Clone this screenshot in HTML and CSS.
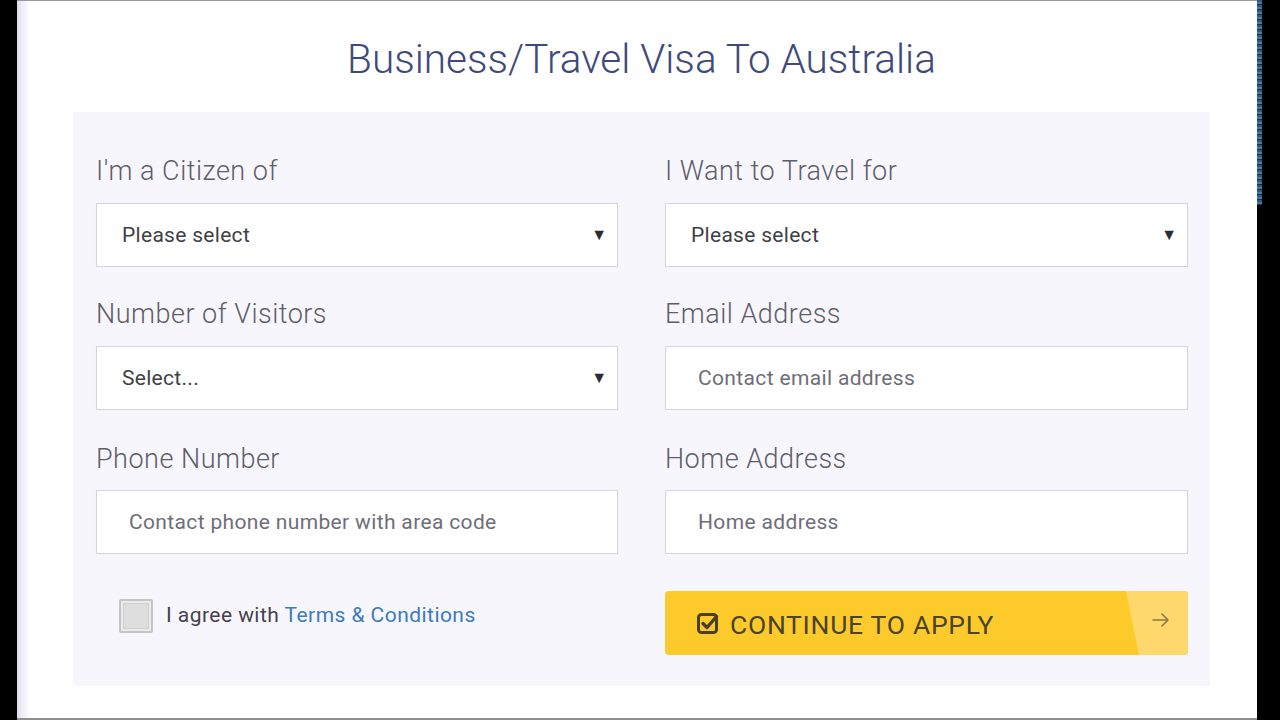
FILE: index.html
```html
<!DOCTYPE html>
<html lang="en">
<head>
<meta charset="utf-8">
<title>Business/Travel Visa To Australia</title>
<link rel="stylesheet" href="styles.css">
</head>
<body>
<div class="frame">
  <div class="edge-left"></div>
  <main class="page">
    <h1 class="title">Business/Travel Visa To Australia</h1>
    <form class="panel">
      <div class="grid">
        <div class="field">
          <label class="label">I'm a Citizen of</label>
          <div class="box select"><span class="value">Please select</span><span class="caret">&#9660;</span></div>
        </div>
        <div class="field">
          <label class="label">I Want to Travel for</label>
          <div class="box select"><span class="value">Please select</span><span class="caret">&#9660;</span></div>
        </div>
        <div class="field">
          <label class="label">Number of Visitors</label>
          <div class="box select"><span class="value">Select...</span><span class="caret">&#9660;</span></div>
        </div>
        <div class="field">
          <label class="label">Email Address</label>
          <div class="box input"><span class="placeholder">Contact email address</span></div>
        </div>
        <div class="field field-low">
          <label class="label">Phone Number</label>
          <div class="box input"><span class="placeholder">Contact phone number with area code</span></div>
        </div>
        <div class="field field-low">
          <label class="label">Home Address</label>
          <div class="box input"><span class="placeholder">Home address</span></div>
        </div>
        <div class="agree">
          <span class="check"></span>
          <span class="agree-text">I agree with <a class="link" href="#">Terms &amp; Conditions</a></span>
        </div>
        <button type="button" class="cta">
          <svg class="cta-icon" viewBox="0 0 24 24" width="24" height="24" aria-hidden="true">
            <rect x="2.5" y="3.5" width="18" height="18" rx="3" fill="none" stroke="#4a4028" stroke-width="3"/>
            <path d="M7 12.5l4 4 9.5-11" fill="none" stroke="#4a4028" stroke-width="3.4" stroke-linecap="round" stroke-linejoin="round"/>
          </svg>
          <span class="cta-text">CONTINUE TO APPLY</span>
          <span class="cta-end">
            <svg viewBox="0 0 20 20" width="20" height="20" aria-hidden="true">
              <path d="M2 10h15M11 4l6 6-6 6" fill="none" stroke="#8a7a4a" stroke-width="1.6" stroke-linecap="round" stroke-linejoin="round"/>
            </svg>
          </span>
        </button>
      </div>
    </form>
  </main>
  <div class="edge-right"><div class="noise"></div></div>
</div>
</body>
</html>
```

FILE: styles.css
```css
html, body {
  margin: 0;
  padding: 0;
  background: #000;
}
body {
  width: 1280px;
  height: 720px;
  overflow: hidden;
  font-family: Roboto, "Liberation Sans", sans-serif;
}
.frame {
  display: flex;
  height: 720px;
}
.edge-left {
  width: 17px;
  background: #000;
}
.edge-right {
  width: 23px;
  background: #000;
}
.noise {
  width: 5px;
  height: 205px;
  background: repeating-linear-gradient(180deg, #3b6f9e 0 2px, #5a9ad0 2px 4px, #1c3d5e 4px 5px);
  opacity: 0.8;
}
.page {
  flex: 1;
  box-sizing: border-box;
  height: 720px;
  background: linear-gradient(90deg, #dcdaea 0, #eceaf6 4px, #f7f6fc 9px, #fdfdff 12px, #fff 14px);
  border-top: 1px solid #9a9a9a;
  border-bottom: 2px solid #8e8e8e;
  padding: 0 47px 0 56px;
  display: flex;
  flex-direction: column;
}
.title {
  margin: 0;
  height: 111px;
  line-height: 116px;
  text-align: center;
  font-weight: 300;
  font-size: 40.5px;
  color: #3e4a7c;
}
.panel {
  background: #f8f6fd;
  padding: 43px 22px 31px 23px;
}
.grid {
  display: grid;
  grid-template-columns: 522px 523px;
  column-gap: 47px;
  row-gap: 31px;
}
.field {
  display: flex;
  flex-direction: column;
}
.field-low .label {
  margin-top: 2px;
  margin-bottom: 15px;
}
.label {
  font-size: 27px;
  font-weight: 300;
  letter-spacing: 0.5px;
  color: #5e5e6a;
  line-height: 32px;
  margin-bottom: 16px;
}
.box {
  box-sizing: border-box;
  height: 64px;
  background: #fff;
  border: 1px solid #d6d4de;
  box-shadow: 0 0 1px rgba(0,0,0,0.06);
  display: flex;
  align-items: center;
}
.select {
  padding: 0 10px 0 25px;
  justify-content: space-between;
}
.value {
  font-size: 21px;
  letter-spacing: 0.3px;
  color: #3f3f46;
}
.caret {
  font-size: 16px;
  color: #2c2c34;
  padding-bottom: 2px;
}
.input {
  padding-left: 32px;
}
.placeholder {
  font-size: 21px;
  letter-spacing: 0.35px;
  color: #6e6e78;
}
.agree {
  display: flex;
  align-items: flex-start;
  padding-left: 23px;
  padding-top: 8px;
  margin-top: 6px;
}
.check {
  box-sizing: border-box;
  width: 34px;
  height: 34px;
  border: 2px solid #c4c4c8;
  background: #dededf;
  box-shadow: inset 0 0 0 2px #ececee, inset 0 0 0 3px #cfcfd3;
  border-radius: 2px;
  flex: none;
}
.agree-text {
  margin-left: 13px;
  font-size: 21px;
  letter-spacing: 0.45px;
  line-height: 32px;
  color: #45414e;
}
.link {
  color: #3b7bbf;
  text-decoration: none;
}
.cta {
  box-sizing: border-box;
  height: 64px;
  margin-top: 6px;
  border: 0;
  border-radius: 4px;
  padding: 0 0 0 31px;
  background: #fdca2b;
  display: flex;
  align-items: center;
  overflow: hidden;
  font-family: inherit;
  cursor: pointer;
}
.cta-icon {
  flex: none;
}
.cta-text {
  margin-left: 10px;
  font-size: 26.5px;
  letter-spacing: 0.7px;
  color: #4a4330;
  flex: 1;
  text-align: left;
  padding-top: 3px;
}
.cta-end {
  align-self: stretch;
  width: 54px;
  background: #fed86a;
  clip-path: polygon(0 0, 100% 0, 100% 100%, 13px 100%);
  display: flex;
  align-items: center;
  justify-content: center;
  padding-left: 8px;
  padding-bottom: 6px;
}
```
